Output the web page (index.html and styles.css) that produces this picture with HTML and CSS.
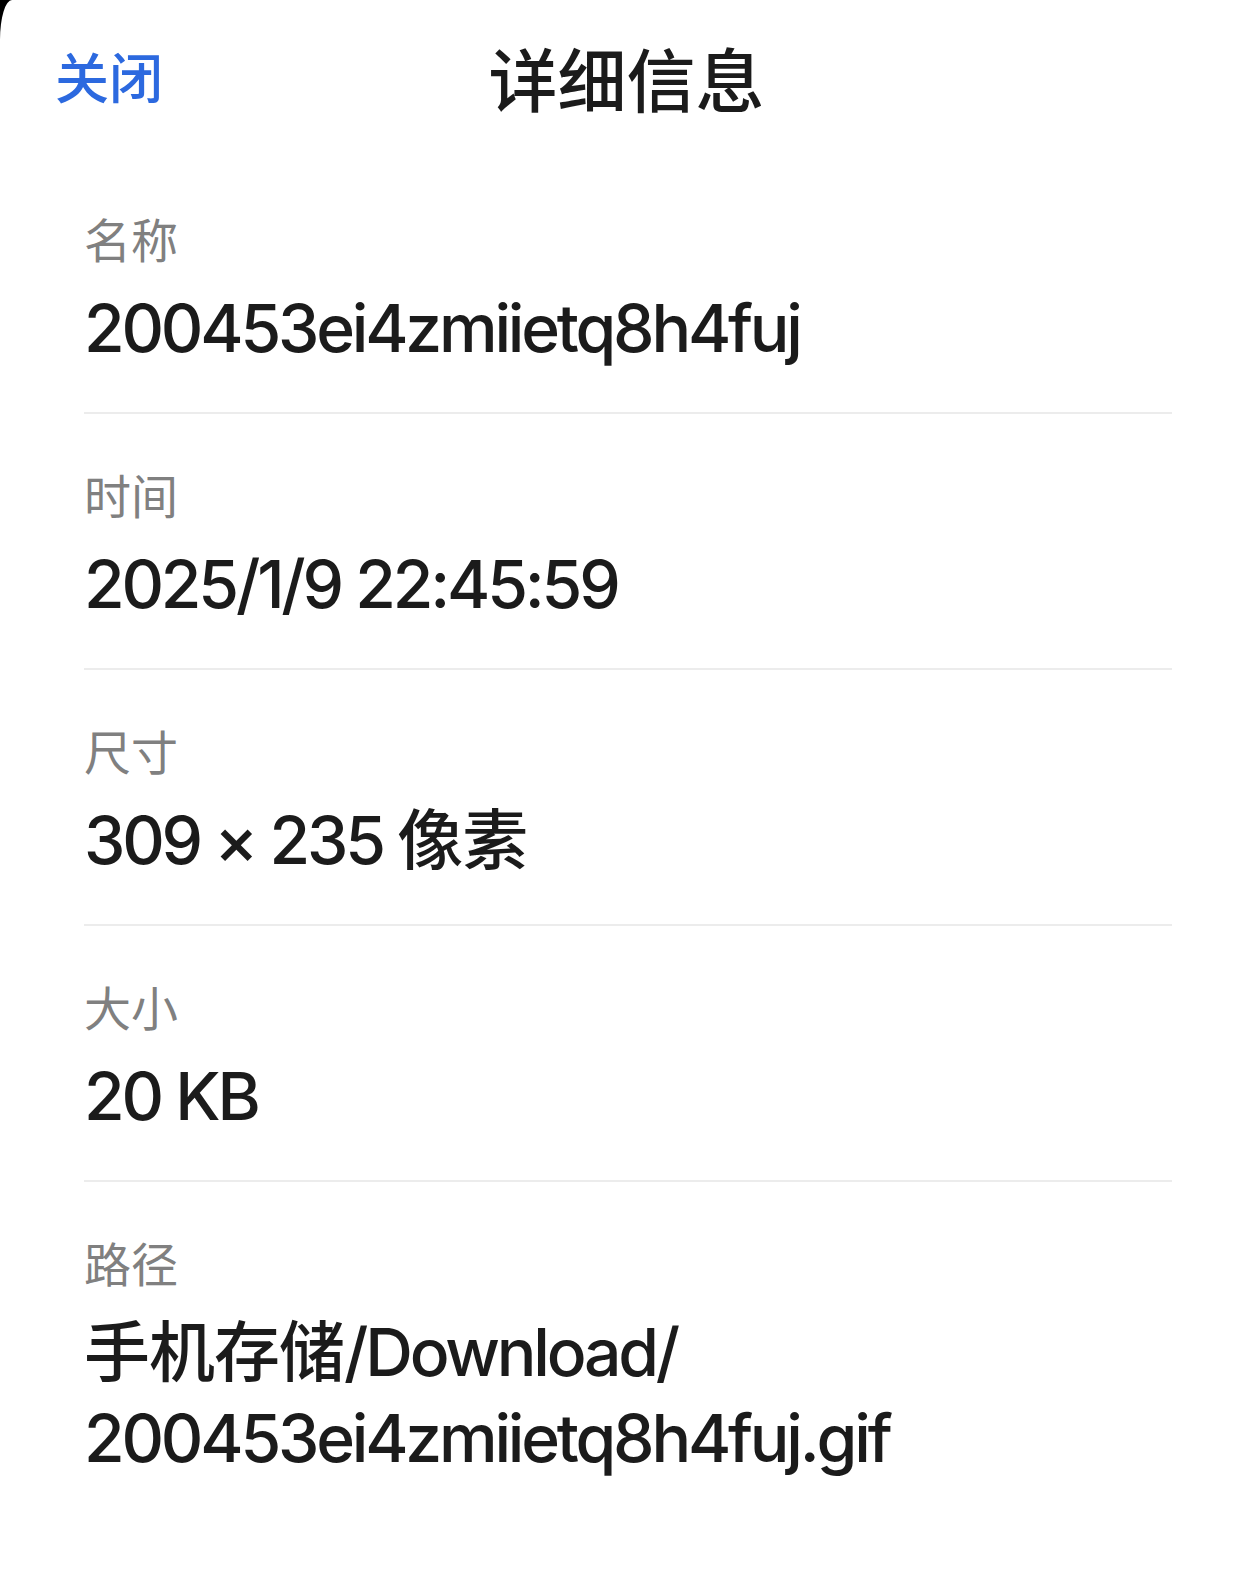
FILE: index.html
```html
<!DOCTYPE html>
<html lang="zh-CN">
<head>
<meta charset="utf-8">
<title>详细信息</title>
<link rel="stylesheet" href="styles.css">
</head>
<body>
<div class="sheet">
  <header class="header">
    <span class="close">关闭</span>
    <h1 class="title">详细信息</h1>
  </header>
  <main class="list">
    <section class="item">
      <div class="label">名称</div>
      <div class="value">200453ei4zmiietq8h4fuj</div>
    </section>
    <section class="item">
      <div class="label">时间</div>
      <div class="value">2025/1/9 22:45:59</div>
    </section>
    <section class="item">
      <div class="label">尺寸</div>
      <div class="value">309 × 235 <span class="cjk">像素</span></div>
    </section>
    <section class="item">
      <div class="label">大小</div>
      <div class="value">20 KB</div>
    </section>
    <section class="item last">
      <div class="label">路径</div>
      <div class="value"><span class="cjk">手机存储</span>/Download/<br>200453ei4zmiietq8h4fuj.gif</div>
    </section>
  </main>
</div>
</body>
</html>
```

FILE: styles.css
```css
html, body {
  margin: 0;
  padding: 0;
  background: #000;
  overflow: hidden;
}
body {
  font-family: Inter, "Noto Sans CJK SC", sans-serif;
}
.sheet {
  background: #fff;
  height: 100vh;
  border-top-left-radius: 12px 40px;
  box-sizing: border-box;
}
.header {
  position: relative;
  height: 158px;
  display: flex;
  align-items: center;
  justify-content: center;
  padding-bottom: 4px;
  box-sizing: border-box;
}
.close {
  position: absolute;
  left: 55px;
  top: 43px;
  font-family: "Noto Sans CJK SC", sans-serif;
  font-size: 54px;
  line-height: 66px;
  color: #2c69df;
  font-weight: 500;
}
.title {
  margin: 0;
  margin-left: 18px;
  font-family: "Noto Sans CJK SC", sans-serif;
  font-size: 69px;
  line-height: 80px;
  font-weight: 500;
  color: #1b1b1b;
}
.list {
  padding: 0 63px 0 84px;
}
.item {
  padding: 50px 0 41px;
  border-bottom: 2px solid #ececec;
}
.item.last {
  border-bottom: none;
}
.label {
  font-family: "Noto Sans CJK SC", sans-serif;
  font-size: 47px;
  line-height: 60px;
  color: #808080;
}
.value {
  margin-top: 17px;
  font-size: 66px;
  line-height: 86px;
  font-weight: 500;
  color: #1b1b1b;
  letter-spacing: -3.2px;
}
.cjk {
  letter-spacing: -1px;
}
```
